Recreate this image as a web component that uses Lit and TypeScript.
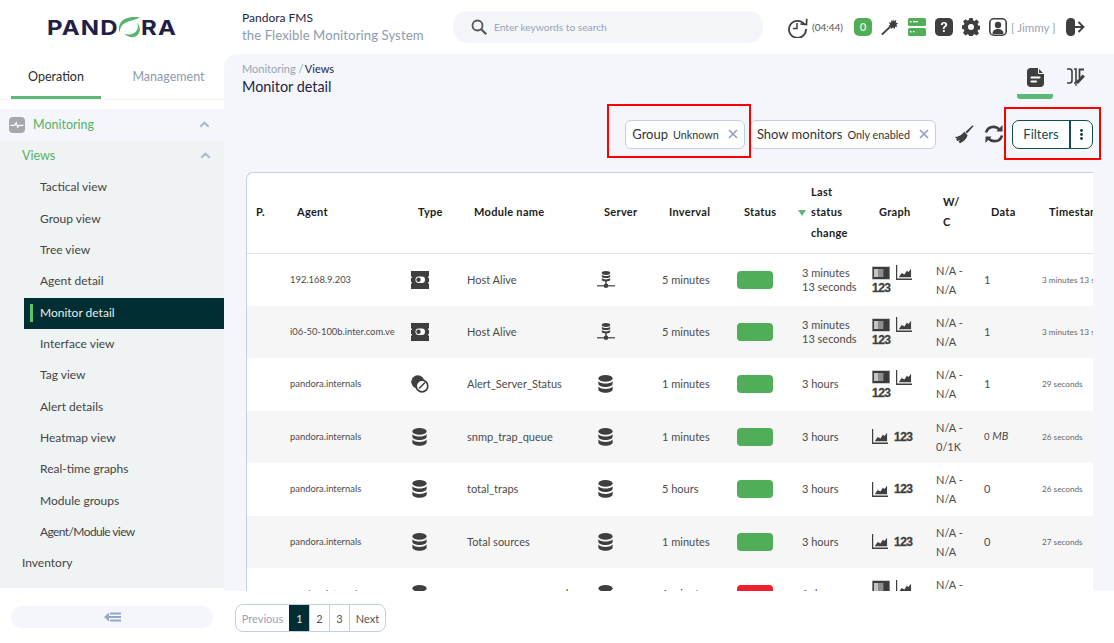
import { LitElement, html, css, svg } from 'lit';
import { customElement } from 'lit/decorators.js';

const dark = '#3f3f3f';

const icons = {
  db: svg`<svg class="ic db" width="15" height="18" viewBox="0 0 16 18" preserveAspectRatio="none" fill="${dark}">
    <ellipse cx="8" cy="3.4" rx="7.6" ry="3.4"/>
    <path d="M.4 6.2C2.4 8 5 8.6 8 8.6s5.600-.6 7.600-2.400v2.600C15.600 10.800 12 12 8 12S.4 10.800.4 8.800z"/>
    <path d="M.4 11.600C2.400 13.400 5 14 8 14s5.600-.6 7.600-2.400v3c0 1.800-3.600 3.200-7.600 3.200S.4 16.400.4 14.600z"/></svg>`,
  netdb: svg`<svg class="ic" width="18" height="18" viewBox="0 0 18 18" fill="${dark}">
    <ellipse cx="9" cy="2" rx="4.2" ry="1.9"/>
    <path d="M4.800 3.700C6 4.800 7.500 5 9 5s3-.2 4.200-1.300v1.700C13.200 6.500 11.400 7.100 9 7.100s-4.200-.6-4.200-1.700z"/>
    <path d="M4.800 7.100C6 8.200 7.500 8.400 9 8.400s3-.2 4.200-1.300v1.700c0 1.100-1.800 1.700-4.200 1.700s-4.200-.6-4.200-1.700z"/>
    <rect x="8.3" y="10" width="1.4" height="4"/><rect x="0" y="14.2" width="18" height="1.2"/>
    <circle cx="9" cy="14.8" r="2.3"/></svg>`,
  card: svg`<svg class="ic" width="18" height="18" viewBox="0 0 18 18">
    <path fill="${dark}" d="M0 0h18v5.600h-.9v1.400h.9v4h-.9v1.400h.9V18H0v-5.600h.9V11H0V7h.9V5.600H0z"/>
    <rect x="4.5" y="5.5" width="9.5" height="6.5" rx="3.2" fill="#fff"/>
    <circle cx="7.5" cy="8.8" r="2.2" fill="${dark}"/></svg>`,
  alert: svg`<svg class="ic" width="18" height="18" viewBox="0 0 18 18">
    <circle cx="6.8" cy="6.8" r="6.6" fill="${dark}"/>
    <circle cx="11" cy="11" r="5.8" fill="#fff" stroke="${dark}" stroke-width="1.7"/>
    <path d="M8 13.500l6-6" stroke="${dark}" stroke-width="1.6"/></svg>`,
  module: svg`<svg width="18" height="14" viewBox="0 0 18 14">
    <rect x="0" y="0" width="18" height="14" fill="#cfcfcf"/>
    <rect x="0.5" y="1" width="17" height="12" fill="#3c3c3c"/>
    <rect x="2" y="3" width="4" height="8" fill="#c4c4c4"/>
    <rect x="6" y="3" width="5" height="8" fill="#8d8d8d"/>
    <rect x="11" y="3" width="1" height="8" fill="#5b5b5b"/></svg>`,
  chart: svg`<svg width="16" height="15" viewBox="0 0 17 16" preserveAspectRatio="none" fill="${dark}">
    <path d="M0 0h1.300v14.500H17V16H0z"/>
    <path d="M3 13l3-4.500 3 1.600L11.500 6l1.800 1.400L16 4v9z"/></svg>`,
};

const sideIcon = html`<svg width="16" height="16" viewBox="0 0 16 16">
  <rect width="16" height="16" rx="4" fill="#a3a9ab"/>
  <path d="M1.500 8.300h4.200l1.500-2.600 1.500 4.400 1.300-1.800h4.500" fill="none" stroke="#fff" stroke-width="1.2"/></svg>`;

const chevron = html`<svg class="chev" width="11" height="7" viewBox="0 0 11 7">
  <path d="M1.300 5.700l4.200-4 4.200 4" fill="none" stroke="#a9b7cd" stroke-width="2"/></svg>`;

const closeX = html`<svg width="10" height="10" viewBox="0 0 10 10">
  <path d="M1 1l8 8M9 1l-8 8" stroke="#8fa1bd" stroke-width="1.7"/></svg>`;

const menu = [
  'Tactical view', 'Group view', 'Tree view', 'Agent detail', 'Monitor detail', 'Interface view',
  'Tag view', 'Alert details', 'Heatmap view', 'Real-time graphs', 'Module groups', 'Agent/Module view',
];

interface Row {
  agent: string;
  type: 'db' | 'card' | 'alert';
  name: string;
  server: 'db' | 'netdb';
  interval: string;
  status: string;
  change: string[];
  graph: 'full' | 'short';
  wc: string;
  data: unknown;
  time: string;
}

const rows: Row[] = [
  { agent: '192.168.9.203', type: 'card', name: 'Host Alive', server: 'netdb', interval: '5 minutes', status: 'ok', change: ['3 minutes', '13 seconds'], graph: 'full', wc: 'N/A - N/A', data: '1', time: '3 minutes 13 seconds' },
  { agent: 'i06-50-100b.inter.com.ve', type: 'card', name: 'Host Alive', server: 'netdb', interval: '5 minutes', status: 'ok', change: ['3 minutes', '13 seconds'], graph: 'full', wc: 'N/A - N/A', data: '1', time: '3 minutes 13 seconds' },
  { agent: 'pandora.internals', type: 'alert', name: 'Alert_Server_Status', server: 'db', interval: '1 minutes', status: 'ok', change: ['3 hours'], graph: 'full', wc: 'N/A - N/A', data: '1', time: '29 seconds' },
  { agent: 'pandora.internals', type: 'db', name: 'snmp_trap_queue', server: 'db', interval: '1 minutes', status: 'ok', change: ['3 hours'], graph: 'short', wc: 'N/A - 0/1K', data: html`<small>0</small> <em>MB</em>`, time: '26 seconds' },
  { agent: 'pandora.internals', type: 'db', name: 'total_traps', server: 'db', interval: '5 hours', status: 'ok', change: ['3 hours'], graph: 'short', wc: 'N/A - N/A', data: '0', time: '26 seconds' },
  { agent: 'pandora.internals', type: 'db', name: 'Total sources', server: 'db', interval: '1 minutes', status: 'ok', change: ['3 hours'], graph: 'short', wc: 'N/A - N/A', data: '0', time: '27 seconds' },
  { agent: 'pandora.internals', type: 'db', name: 'snmp_queue_error_d', server: 'db', interval: '1 minutes', status: 'bad', change: ['1 day'], graph: 'full', wc: 'N/A - N/A', data: '', time: '' },
];

@customElement('app-root')
export class AppRoot extends LitElement {
  static styles = css`
    :host {
      display: block;
      width: 1114px;
      height: 643px;
      overflow: hidden;
      background: #fff;
      font-family: Lato, sans-serif;
      color: #333;
    }
    .top {
      height: 54px;
      display: flex;
      align-items: center;
    }
    .logo {
      width: 242px;
      padding-left: 47px;
      box-sizing: border-box;
      font-family: Inter, sans-serif;
      font-weight: 700;
      font-size: 20.5px;
      letter-spacing: 1px;
      color: #221f45;
    }
    .logo div {
      display: inline-flex;
      align-items: center;
      transform: scaleX(1.17);
      transform-origin: left center;
      margin-top: 1px;
    }
    .logo svg {
      margin: -1px 0 0 -1px;
    }
    .brand {
      width: 211px;
      line-height: 16px;
      margin-top: -2px;
    }
    .brand b {
      display: block;
      font-weight: 400;
      font-size: 12px;
      color: #221f45;
    }
    .brand span {
      font-size: 13.1px;
      color: #8d9bb0;
      letter-spacing: 0.1px;
    }
    .search {
      width: 310px;
      height: 32px;
      border-radius: 14px;
      background: #f3f5f9;
      display: flex;
      align-items: center;
      gap: 7px;
      padding-left: 18px;
      box-sizing: border-box;
      font-size: 10.2px;
      color: #97a4b8;
    }
    .tools {
      margin-left: 24px;
      display: flex;
      align-items: center;
      height: 30px;
    }
    .tools svg {
      flex: none;
    }
    .time {
      font-size: 10px;
      color: #555;
      margin: 0 11px 0 4px;
    }
    .zero {
      width: 18px;
      height: 18px;
      border-radius: 5px;
      background: #4fae57;
      color: #d8f0da;
      font-size: 11.5px;
      font-weight: 700;
      text-align: center;
      line-height: 18px;
      margin-right: 9px;
    }
    .gap {
      margin-right: 9px;
    }
    .user {
      font-size: 11.5px;
      color: #97a4b8;
      margin: 0 10px 0 4px;
      white-space: nowrap;
    }
    .body {
      display: flex;
      height: 589px;
    }
    .side {
      width: 224px;
      flex: none;
      display: flex;
      flex-direction: column;
    }
    .tabs {
      display: flex;
      height: 45px;
      padding: 0 0 0 11px;
      border-bottom: 1px solid #f0f2f5;
      font-size: 12.5px;
    }
    .tabs div {
      width: 90px;
      text-align: center;
      line-height: 46px;
      color: #2d2d2d;
      border-bottom: 3px solid #5cb877;
      height: 42px;
    }
    .tabs div + div {
      width: 111px;
      margin-left: 12px;
      border: 0;
      color: #8d9bb0;
    }
    .mon {
      margin-top: 9px;
      height: 32px;
      background: #f4f6fb;
      display: flex;
      align-items: center;
      padding: 0 0 1px 9px;
      box-sizing: border-box;
      gap: 8px;
      font-size: 12.5px;
      color: #55b168;
    }
    .chev {
      margin-left: auto;
      margin-right: 14px;
    }
    .tree {
      height: 447px;
      background: #eff3f4;
      font-size: 12px;
      color: #444;
    }
    .views {
      height: 31.33px;
      display: flex;
      align-items: center;
      padding: 0 0 2px 22px;
      box-sizing: border-box;
      font-size: 12.5px;
      color: #55b168;
    }
    .views .chev {
      margin-right: 13px;
    }
    .item {
      height: 31.33px;
      line-height: 30.5px;
      margin-left: 24px;
      padding-left: 16px;
      position: relative;
    }
    .item.tight {
      letter-spacing: -0.6px;
    }
    .item.on {
      background: #012e33;
      color: #e6eeee;
    }
    .item.on::before {
      content: '';
      position: absolute;
      left: 6px;
      top: 6px;
      width: 3px;
      height: 18px;
      background: #5cc06e;
    }
    .inv {
      height: 31.33px;
      line-height: 30px;
      padding-left: 22px;
    }
    .collapse {
      margin: 18px 11px 0;
      height: 22px;
      border-radius: 11px;
      background: #f4f6fb;
      display: flex;
      align-items: center;
      justify-content: center;
    }
    .content {
      width: 890px;
      display: flex;
      flex-direction: column;
    }
    .main {
      height: 537px;
      flex: none;
      background: #f4f6fb;
      border-top-left-radius: 14px;
      padding: 7px 21px 0 18px;
      box-sizing: border-box;
      overflow: hidden;
      position: relative;
    }
    .head {
      display: flex;
      height: 38px;
    }
    .crumb {
      font-size: 11px;
      line-height: 15px;
      color: #97a4b8;
    }
    .crumb span {
      color: #221f45;
      margin-left: -1.5px;
    }
    h1 {
      margin: 1px 0 0;
      font-size: 14.4px;
      line-height: 20px;
      font-weight: 400;
      color: #221f45;
    }
    .views-tabs {
      margin-left: auto;
      margin-right: -1px;
      display: flex;
      gap: 5px;
    }
    .views-tabs div {
      width: 36px;
      height: 38px;
      display: flex;
      justify-content: center;
      padding-top: 7px;
      box-sizing: border-box;
    }
    .views-tabs .on {
      border-bottom: 5px solid #5cb877;
      border-radius: 0 0 3px 3px;
    }
    .filters {
      height: 30px;
      margin-top: 20px;
      display: flex;
      align-items: center;
    }
    .chip {
      height: 29px;
      box-sizing: border-box;
      background: #fff;
      border: 1px solid #c0cfe4;
      border-radius: 6px;
      display: flex;
      align-items: center;
      padding: 0 6px;
      font-size: 13px;
      color: #333;
      margin-right: 6px;
      white-space: nowrap;
    }
    .chip:first-child {
      margin-left: auto;
      margin-right: 5px;
    }
    .chip small {
      font-size: 10.8px;
      margin: 0 9px 0 5px;
    }
    .broom {
      margin-left: 13px;
    }
    .spin {
      margin-left: 10px;
      margin-right: 8px;
    }
    .fbtn {
      width: 81px;
      height: 29px;
      box-sizing: border-box;
      border: 1px solid #0d4f52;
      border-radius: 7px;
      background: #fff;
      color: #0d4f52;
      display: flex;
      font-size: 13px;
      line-height: 27px;
    }
    .fbtn span {
      width: 56px;
      text-align: center;
      border-right: 2px solid #0d4f52;
    }
    .fbtn i {
      flex: 1;
      display: flex;
      align-items: center;
      justify-content: center;
    }
    .card {
      margin: 23px 0 0 4px;
      border: solid #c0cfe4;
      border-width: 1px 0 0 1px;
      border-top-left-radius: 7px;
      background: #fff;
      overflow: hidden;
    }
    table {
      table-layout: fixed;
      width: 903px;
      border-collapse: collapse;
    }
    th {
      padding: 0 0 1px 14px;
      height: 80px;
      font-size: 11px;
      line-height: 20.5px;
      font-weight: 700;
      color: #1c1c1c;
      text-align: left;
      border-bottom: 1px solid #e2e2e2;
      letter-spacing: 0.3px;
      box-sizing: border-box;
    }
    th:first-child {
      padding-left: 9px;
    }
    th.sort {
      position: relative;
      padding-left: 16px;
    }
    th.sort::before {
      content: '';
      position: absolute;
      left: 3px;
      top: 37px;
      border: solid transparent;
      border-width: 6px 4.5px 0;
      border-top-color: #5cb877;
    }
    td {
      height: 52.5px;
      padding: 0 0 0 7px;
      font-size: 11px;
      line-height: 14px;
      color: #4b4b4b;
      box-sizing: border-box;
      overflow: hidden;
    }
    tbody tr:nth-child(even) td {
      background: #f6f6f7;
    }
    .c-agent {
      font-size: 9.4px;
      white-space: nowrap;
    }
    .ic {
      display: block;
    }
    .db {
      margin-left: 1px;
    }
    .c-wc {
      line-height: 19px;
    }
    .c-time {
      font-size: 8.2px;
      white-space: nowrap;
      color: #666;
    }
    td small {
      font-size: 9.5px;
    }
    .pill {
      width: 36px;
      height: 18px;
      border-radius: 4px;
      background: #4fae57;
    }
    .pill.bad {
      background: #f0202f;
    }
    .graph {
      display: flex;
      flex-wrap: wrap;
      align-items: center;
      column-gap: 6px;
      row-gap: 3px;
      margin-top: -1px;
    }
    .graph.short {
      margin-top: 0;
    }
    .graph b {
      font-family: 'Liberation Sans', sans-serif;
      font-size: 12px;
      line-height: 10px;
      letter-spacing: -0.5px;
      color: #3f3f3f;
      -webkit-text-stroke: 0.3px #3f3f3f;
    }
    .graph:not(.short) b {
      flex-basis: 100%;
    }
    .mark {
      position: absolute;
      border: 2px solid #f00;
      box-sizing: border-box;
    }
    .m1 {
      left: 383px;
      top: 50px;
      width: 144px;
      height: 54px;
    }
    .m2 {
      left: 780px;
      top: 53px;
      width: 97px;
      height: 53px;
    }
    .foot {
      flex: 1;
      padding: 13px 0 0 11px;
    }
    .pager {
      display: inline-flex;
      height: 28px;
      box-sizing: border-box;
      border: 1px solid #c0cfe4;
      border-radius: 8px;
      font-size: 11px;
      line-height: 27px;
      color: #555;
      overflow: hidden;
    }
    .pager span {
      min-width: 19px;
      text-align: center;
      border-left: 1px solid #c0cfe4;
    }
    .pager .prev {
      width: 53px;
      border: 0;
      color: #97a4b8;
    }
    .pager .cur {
      width: 19px;
      background: #012e33;
      color: #e6eeee;
      border-color: #012e33;
    }
    .pager .next {
      width: 35px;
    }
    col.p { width: 36px; }
    col.agent { width: 121px; }
    col.type { width: 56px; }
    col.name { width: 130px; }
    col.server { width: 65px; }
    col.interval { width: 75px; }
    col.status { width: 65px; }
    col.change { width: 70px; }
    col.gr { width: 64px; }
    col.wc { width: 48px; }
    col.data { width: 58px; }
    col.time { width: 115px; }
  `;

  renderTools() {
    return html`<div class="tools">
      <svg width="21" height="21" viewBox="0 0 21 21" fill="none" stroke="${dark}" stroke-width="1.8">
        <path d="M17.500 7.500A8.500 8.500 0 1 0 19 12"/><path d="M10 6v5.500H6" stroke-width="1.5"/>
        <path d="M13.500 6.800l6 .8.200-5.800" stroke-width="1.7"/></svg>
      <span class="time">(04:44)</span>
      <div class="zero">0</div>
      <svg class="gap" width="18" height="20" viewBox="0 0 20 20" fill="${dark}">
        <path d="M1 18.500L11 9" stroke="${dark}" stroke-width="2.2"/>
        <path d="M13.500 1l1 2.300 2.500-1-.6 2.600 2.600.8-2 1.800 1.300 2.200-2.600 0-.6 2.500-2-1.700-1.900 1.600-.3-2.600-2.500-.4 1.700-2-1.500-2 2.600-.2.500-2.600 2 1.400z"/></svg>
      <svg class="gap" width="18" height="18" viewBox="0 0 18 18">
        <rect y="0" width="18" height="8" rx="1.5" fill="#4fae57"/><rect y="10" width="18" height="8" rx="1.5" fill="#4fae57"/>
        <rect x="2" y="3" width="1.5" height="1.5" fill="#fff"/><rect x="5" y="3" width="5" height="1.3" fill="#fff"/>
        <rect x="2" y="13" width="1.5" height="1.5" fill="#fff"/><rect x="5" y="13" width="1.5" height="1.3" fill="#fff"/></svg>
      <svg class="gap" width="18" height="18" viewBox="0 0 18 18">
        <rect width="18" height="18" rx="4.5" fill="${dark}"/>
        <path d="M5.800 7c0-2 1.400-3 3.300-3s3.100 1 3.100 2.600c0 2.400-2.600 2.300-2.600 4.400H7.900c0-3 2.300-2.900 2.300-4.300 0-.7-.4-1.100-1.100-1.100-.8 0-1.300.5-1.300 1.400z" fill="#fff"/>
        <rect x="7.9" y="12" width="1.9" height="1.9" fill="#fff"/></svg>
      <svg class="gap" width="18" height="18" viewBox="0 0 18 18" fill="${dark}">
        <path fill-rule="evenodd" d="M7.300 0h3.400l.4 2.400 1.500.6 2-1.400 2.400 2.400-1.400 2 .6 1.500 2.400.4v3.400l-2.400.4-.6 1.500 1.400 2-2.400 2.400-2-1.400-1.500.6-.4 2.400H7.300l-.4-2.400-1.500-.6-2 1.400L1 14.800l1.400-2-.6-1.500L-.6 10.900V7.500l2.400-.4.600-1.500-1.400-2L3.400 1.200l2 1.400 1.500-.6zM9 6a3 3 0 1 0 0 6 3 3 0 0 0 0-6z"/></svg>
      <svg width="18" height="18" viewBox="0 0 18 18">
        <rect x=".8" y=".8" width="16.4" height="16.4" rx="4" fill="#fff" stroke="${dark}" stroke-width="1.6"/>
        <circle cx="9" cy="7" r="3.2" fill="${dark}"/><path d="M3.500 16c0-3.600 2.400-5 5.500-5s5.500 1.400 5.500 5z" fill="${dark}"/></svg>
      <span class="user">[ Jimmy ]</span>
      <svg width="19" height="18" viewBox="0 0 19 18">
        <path d="M5 0C2 0 0 2 0 5v8c0 3 2 5 5 5 2.500 0 4-1.500 4-3.500V3.500C9 1.500 7.500 0 5 0z" fill="${dark}"/>
        <path d="M5.500 9h12M12.500 4l5 5-5 5" fill="none" stroke="${dark}" stroke-width="1.8"/></svg>
    </div>`;
  }

  renderGraph(r: Row) {
    if (r.graph === 'short') {
      return html`<div class="graph short">${icons.chart}<b>123</b></div>`;
    }
    return html`<div class="graph">${icons.module}${icons.chart}<b>123</b></div>`;
  }

  renderRow(r: Row) {
    return html`<tr>
      <td></td>
      <td class="c-agent">${r.agent}</td>
      <td>${icons[r.type]}</td>
      <td>${r.name}</td>
      <td>${icons[r.server]}</td>
      <td>${r.interval}</td>
      <td><div class="pill ${r.status === 'bad' ? 'bad' : ''}"></div></td>
      <td>${r.change.map((c) => html`${c}<br />`)}</td>
      <td>${this.renderGraph(r)}</td>
      <td class="c-wc">${r.wc}</td>
      <td>${r.data}</td>
      <td class="c-time">${r.time}</td>
    </tr>`;
  }

  render() {
    return html`
      <div class="top">
        <div class="logo">
          <div>
            PAND<svg width="20" height="23" viewBox="0 0 23 23" preserveAspectRatio="none" fill="#55b56f">
              <path d="M22.500 1.500C16 .5 7.500 1 3.500 6.500 1.500 9.500 1 13 2.500 16.500 2.500 12 4.500 8.500 8.500 6.500 12.500 4.500 18 4 22.500 1.500z"/>
              <path d="M19 6.500c1.500 2 1.800 5 .5 7.500-2 3.800-7 5.500-12.500 3.800 5 5 13 4.600 15-2.300 1-3.500-.5-7-3-9z"/>
            </svg>RA
          </div>
        </div>
        <div class="brand"><b>Pandora FMS</b><span>the Flexible Monitoring System</span></div>
        <div class="search">
          <svg width="16" height="16" viewBox="0 0 16 16" fill="none" stroke="#555" stroke-width="1.8">
            <circle cx="6.5" cy="6.5" r="5"/><path d="M10.200 10.200l5 5" stroke-width="2.2"/></svg>
          Enter keywords to search
        </div>
        ${this.renderTools()}
      </div>
      <div class="body">
        <div class="side">
          <div class="tabs"><div>Operation</div><div>Management</div></div>
          <div class="mon">${sideIcon}Monitoring${chevron}</div>
          <div class="tree">
            <div class="views">Views${chevron}</div>
            ${menu.map((m) => html`<div class="item ${m === 'Monitor detail' ? 'on' : ''} ${m === 'Agent/Module view' ? 'tight' : ''}">${m}</div>`)}
            <div class="inv">Inventory</div>
          </div>
          <div class="collapse">
            <svg width="17" height="10" viewBox="0 0 17 10" fill="#97a7c4">
              <path d="M0 5l5-4.500V4h12v2H5v3.500z"/><rect x="6" y="0.5" width="11" height="2"/><rect x="6" y="7.5" width="11" height="2"/></svg>
          </div>
        </div>
        <div class="content">
          <div class="main">
            <div class="head">
              <div>
                <div class="crumb">Monitoring / <span>Views</span></div>
                <h1>Monitor detail</h1>
              </div>
              <div class="views-tabs">
                <div class="on">
                  <svg width="17" height="19" viewBox="0 0 17 19">
                    <path d="M3.500 0H11l6 6v9.500c0 2-1.500 3.500-3.500 3.500h-10C1.500 19 0 17.500 0 15.500v-12C0 1.500 1.500 0 3.500 0z" fill="${dark}"/>
                    <path d="M11.500 0v5.500H17" fill="none" stroke="#f4f6fb" stroke-width="1"/>
                    <rect x="3.5" y="8.5" width="10" height="2" rx="1" fill="#fff"/><rect x="3.5" y="12.5" width="6.5" height="2" rx="1" fill="#fff"/></svg>
                </div>
                <div>
                  <svg width="18" height="18" viewBox="0 0 18 18" fill="none" stroke="${dark}">
                    <path d="M0 1h2.500C4 1 5 2 5 3.500v9C5 14 4 15 2.500 15H0" stroke-width="1.6"/>
                    <path d="M7 1h2v14H7" stroke-width="1.6"/>
                    <path d="M17 1.500h-4.500V10" stroke-width="1.8"/>
                    <path d="M16.800 7.500l-7 7.500" stroke-width="3.2"/>
                    <path d="M8 18l.6-2.600 1.800 1.800z" fill="${dark}" stroke="none"/></svg>
                </div>
              </div>
            </div>
            <div class="filters">
              <div class="chip">Group<small>Unknown</small><span>${closeX}</span></div>
              <div class="chip">Show monitors<small>Only enabled</small><span>${closeX}</span></div>
              <svg class="broom" width="19" height="19" viewBox="0 0 19 19" fill="${dark}">
                <path d="M18.500 1.200l-.9-.9-7.300 6.600 1.700 1.700z"/>
                <path d="M9.300 6.800l3.300 3.400c-1 3.800-3.800 6.300-7.600 8l-1.400-1.400 1.400-2-2.300 1.300L1 14.400l1.800-1.800-2 .8-.5-1.300C3.700 11.500 7 10 9.300 6.800z"/></svg>
              <svg class="spin" width="20" height="20" viewBox="0 0 20 20" fill="none" stroke="${dark}" stroke-width="2.7">
                <path d="M2 8.500C3 5 6 2.800 9.500 2.800c2.500 0 4.500 1 6 3"/><path d="M18 11.500c-1 3.500-4 5.700-7.500 5.700-2.500 0-4.500-1-6-3"/>
                <path d="M18.500 1v6.500H12.500z" fill="${dark}" stroke="none"/><path d="M1.500 19v-6.500h6z" fill="${dark}" stroke="none"/></svg>
              <div class="fbtn">
                <span>Filters</span>
                <i><svg width="3" height="11" viewBox="0 0 3 11" fill="#12393c"><circle cx="1.5" cy="1.5" r="1.4"/><circle cx="1.5" cy="5.5" r="1.4"/><circle cx="1.5" cy="9.5" r="1.4"/></svg></i>
              </div>
            </div>
            <div class="card">
              <table>
                <colgroup>
                  <col class="p" /><col class="agent" /><col class="type" /><col class="name" />
                  <col class="server" /><col class="interval" /><col class="status" /><col class="change" />
                  <col class="gr" /><col class="wc" /><col class="data" /><col class="time" />
                </colgroup>
                <thead>
                  <tr>
                    <th>P.</th><th>Agent</th><th>Type</th><th>Module name</th><th>Server</th><th>Inverval</th>
                    <th>Status</th><th class="sort">Last status change</th><th>Graph</th><th>W/<br />C</th><th>Data</th><th>Timestamp</th>
                  </tr>
                </thead>
                <tbody>${rows.map((r) => this.renderRow(r))}</tbody>
              </table>
            </div>
            <div class="mark m1"></div>
            <div class="mark m2"></div>
          </div>
          <div class="foot">
            <div class="pager">
              <span class="prev">Previous</span><span class="cur">1</span><span>2</span><span>3</span><span class="next">Next</span>
            </div>
          </div>
        </div>
      </div>
    `;
  }
}
